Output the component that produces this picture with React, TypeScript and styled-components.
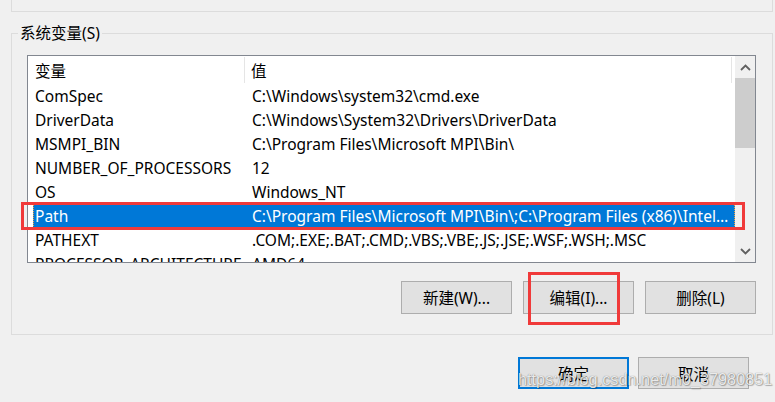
import styled, { createGlobalStyle } from "styled-components";

const GlobalStyle = createGlobalStyle`
  body {
    margin: 0;
    background: #f0f0f0;
    font-family: "Noto Sans", "Noto Sans CJK SC", sans-serif;
    color: #000000;
  }
`;

interface EnvVar {
  name: string;
  value: string;
}

const vars: EnvVar[] = [
  { name: "ComSpec", value: "C:\\Windows\\system32\\cmd.exe" },
  { name: "DriverData", value: "C:\\Windows\\System32\\Drivers\\DriverData" },
  { name: "MSMPI_BIN", value: "C:\\Program Files\\Microsoft MPI\\Bin\\" },
  { name: "NUMBER_OF_PROCESSORS", value: "12" },
  { name: "OS", value: "Windows_NT" },
  {
    name: "Path",
    value:
      "C:\\Program Files\\Microsoft MPI\\Bin\\;C:\\Program Files (x86)\\Intel\\Intel(R) Management Engine Components\\iCLS\\",
  },
  { name: "PATHEXT", value: ".COM;.EXE;.BAT;.CMD;.VBS;.VBE;.JS;.JSE;.WSF;.WSH;.MSC" },
  { name: "PROCESSOR_ARCHITECTURE", value: "AMD64" },
];

const Chevron = ({ up }: { up?: boolean }) => (
  <svg width="11" height="7" viewBox="0 0 11 7">
    <polyline
      points={up ? "1,6 5.5,1.5 10,6" : "1,1 5.5,5.5 10,1"}
      fill="none"
      stroke="#606060"
      strokeWidth="1.8"
    />
  </svg>
);

export default function App() {
  return (
    <Window>
      <GlobalStyle />
      <PrevGroup />
      <GroupBox>
        <Legend>系统变量(S)</Legend>
        <GroupBody>
          <ListBox>
            <ListContent>
              <HeaderRow>
                <HeaderCell $width={217} $pad={7}>变量</HeaderCell>
                <HeaderCell $width={487} $pad={6}>值</HeaderCell>
              </HeaderRow>
              {vars.map((v) => (
                <Row key={v.name} $selected={v.name === "Path"}>
                  <NameCell>{v.name}</NameCell>
                  <ValueCell>{v.value}</ValueCell>
                </Row>
              ))}
            </ListContent>
            <ScrollBar>
              <ArrowButton>
                <Chevron up />
              </ArrowButton>
              <Thumb />
              <Track />
              <ArrowButton>
                <Chevron />
              </ArrowButton>
            </ScrollBar>
          </ListBox>
          <ButtonRow>
            <Button>新建(W)...</Button>
            <Button>编辑(I)...</Button>
            <Button>删除(L)</Button>
          </ButtonRow>
        </GroupBody>
      </GroupBox>
      <Footer>
        <Button $primary>确定</Button>
        <Button>取消</Button>
      </Footer>

      <Highlight $x={21} $y={202} $w={724} $h={28} />
      <Highlight $x={528} $y={272} $w={92} $h={53} />
      <Watermark>https://blog.csdn.net/m0_37980851</Watermark>
    </Window>
  );
}

const Window = styled.div`
  position: relative;
  width: 775px;
  height: 402px;
  overflow: hidden;

  display: flex;
  flex-direction: column;

  font-size: 15.5px;
`;

const PrevGroup = styled.div`
  height: 12px;
  margin: 0 2px 0 11px;

  border: 1px solid #dcdcdc;
  border-top: none;
  box-sizing: border-box;
`;

const GroupBox = styled.fieldset`
  margin: 11px 2px 0 11px;
  padding: 0;

  border: 1px solid #dcdcdc;
  min-width: 0;
`;

const Legend = styled.legend`
  margin-left: 6px;
  padding: 0 2px;

  line-height: 20px;
`;

const GroupBody = styled.div`
  padding: 12px 16px 20px 15px;

  display: flex;
  flex-direction: column;
`;

const ListBox = styled.div`
  height: 208px;

  display: flex;

  border: 1px solid #828790;
  background: #ffffff;
  box-sizing: border-box;
`;

const ListContent = styled.div`
  flex: 1;
  min-width: 0;
  overflow: hidden;
`;

const HeaderRow = styled.div`
  height: 28px;

  display: flex;
`;

const HeaderCell = styled.div<{ $width: number; $pad: number }>`
  position: relative;
  width: ${(p) => p.$width}px;
  padding-left: ${(p) => p.$pad}px;

  display: flex;
  align-items: center;

  box-sizing: border-box;

  &::after {
    content: "";
    position: absolute;
    right: 0;
    top: 1px;
    bottom: 1px;
    width: 1px;
    background: #e5e5e5;
  }
`;

const Row = styled.div<{ $selected?: boolean }>`
  height: 24px;
  margin-left: 5px;

  display: grid;
  grid-template-columns: 212px 1fr;
  align-items: center;

  background: ${(p) => (p.$selected ? "#0078d7" : "transparent")};
  color: ${(p) => (p.$selected ? "#ffffff" : "#000000")};
  outline: ${(p) => (p.$selected ? "1px dotted #f0a040" : "none")};
  outline-offset: -1px;
  box-sizing: border-box;
`;

const NameCell = styled.div`
  padding-left: 2px;

  white-space: nowrap;
  overflow: hidden;
`;

const ValueCell = styled.div`
  padding-left: 7px;
  padding-right: 5px;

  white-space: nowrap;
  overflow: hidden;
  text-overflow: ellipsis;
`;

const ScrollBar = styled.div`
  width: 20px;

  display: flex;
  flex-direction: column;

  background: #f0f0f0;
`;

const ArrowButton = styled.div`
  height: 22px;

  display: flex;
  align-items: center;
  justify-content: center;
`;

const Thumb = styled.div`
  height: 70px;

  background: #cdcdcd;
`;

const Track = styled.div`
  flex: 1;
`;

const ButtonRow = styled.div`
  margin-top: 18px;

  display: flex;
  justify-content: flex-end;
  gap: 11px;
`;

const Button = styled.button<{ $primary?: boolean }>`
  width: 111px;
  height: 33px;
  padding: 0;

  background: #e1e1e1;
  border: ${(p) => (p.$primary ? "2px solid #0078d7" : "1px solid #adadad")};

  font-family: "Noto Sans", "Noto Sans CJK SC", sans-serif;
  font-size: 15.5px;
  color: #000000;
`;

const Footer = styled.div`
  margin: 22px 26px 0 0;

  display: flex;
  justify-content: flex-end;
  gap: 9px;

  & > button {
    height: 32px;
  }
`;

const Highlight = styled.div<{ $x: number; $y: number; $w: number; $h: number }>`
  position: absolute;
  left: ${(p) => p.$x}px;
  top: ${(p) => p.$y}px;
  width: ${(p) => p.$w}px;
  height: ${(p) => p.$h}px;

  border: 3px solid #f03a3a;
  box-sizing: border-box;
  pointer-events: none;
`;

const Watermark = styled.div`
  position: absolute;
  left: 518px;
  top: 370px;

  font-family: "Liberation Sans", sans-serif;
  font-size: 16.3px;
  color: rgba(255, 255, 255, 0.85);
  text-shadow: 0 0 1px rgba(0, 0, 0, 0.5), 1px 1px 1px rgba(0, 0, 0, 0.25);
  white-space: nowrap;
  pointer-events: none;
`;
